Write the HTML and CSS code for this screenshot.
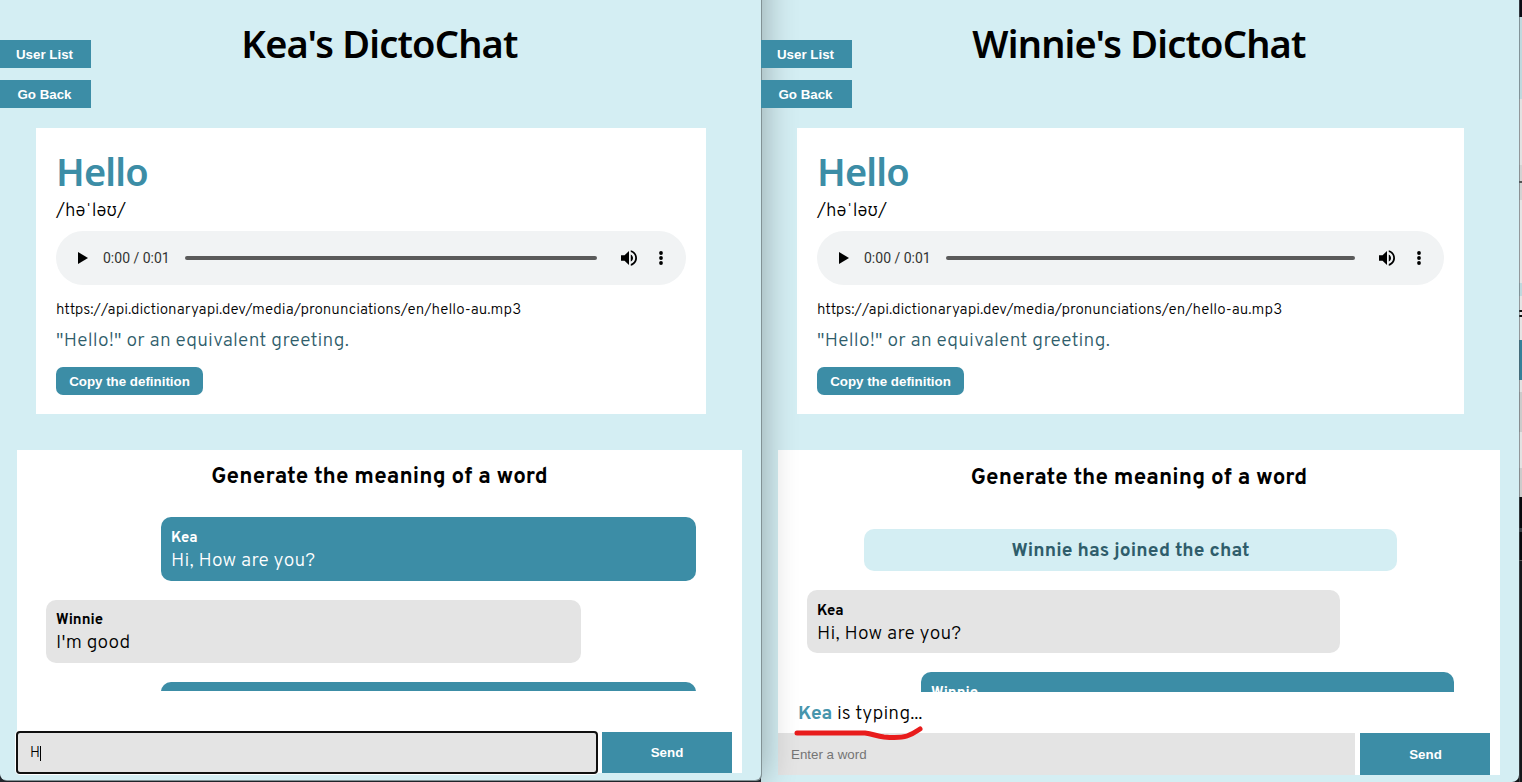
FILE: index.html
```html
<!DOCTYPE html>
<html lang="en">
<head>
<meta charset="utf-8">
<title>DictoChat</title>
<link rel="stylesheet" href="styles.css">
</head>
<body>
<div class="windows">
  <section class="window window-kea">
    <header class="topbar">
      <nav class="nav"><button class="nav-button">User List</button><button class="nav-button">Go Back</button></nav>
      <h1 class="title">Kea's DictoChat</h1>
    </header>
    <article class="card">
      <h2 class="word">Hello</h2>
      <p class="phonetic">/həˈləʊ/</p>
      <div class="player">
        <svg class="play" viewBox="0 0 10 12"><path d="M0 0L10 6L0 12Z"/></svg>
        <span class="time">0:00 / 0:01</span>
        <span class="track"></span>
        <svg class="volume" viewBox="3 3 18 18"><path d="M3 9v6h4l5 5V4L7 9H3zm13.5 3c0-1.77-1.02-3.29-2.5-4.03v8.05c1.48-.73 2.5-2.25 2.5-4.02zM14 3.23v2.06c2.89.86 5 3.54 5 6.71s-2.11 5.85-5 6.71v2.06c4.01-.91 7-4.49 7-8.77s-2.99-7.86-7-8.77z"/></svg>
        <svg class="more" viewBox="0 0 4 14"><circle cx="2" cy="2" r="1.9"/><circle cx="2" cy="7" r="1.9"/><circle cx="2" cy="12" r="1.9"/></svg>
      </div>
      <p class="url">https://api.dictionaryapi.dev/media/pronunciations/en/hello-au.mp3</p>
      <p class="definition">"Hello!" or an equivalent greeting.</p>
      <button class="copy">Copy the definition</button>
    </article>
    <section class="chat">
      <h3 class="chat-title">Generate the meaning of a word</h3>
      <div class="messages">
        <div class="message mine"><b class="author">Kea</b><p class="text">Hi, How are you?</p></div>
        <div class="message theirs"><b class="author">Winnie</b><p class="text">I'm good</p></div>
        <div class="message mine"></div>
      </div>
      <p class="typing"></p>
      <form class="composer">
        <div class="field field-focused">H<span class="caret"></span></div>
        <button class="send" type="button">Send</button>
      </form>
    </section>
  </section>

  <section class="window window-winnie">
    <header class="topbar">
      <nav class="nav"><button class="nav-button">User List</button><button class="nav-button">Go Back</button></nav>
      <h1 class="title">Winnie's DictoChat</h1>
    </header>
    <article class="card">
      <h2 class="word">Hello</h2>
      <p class="phonetic">/həˈləʊ/</p>
      <div class="player">
        <svg class="play" viewBox="0 0 10 12"><path d="M0 0L10 6L0 12Z"/></svg>
        <span class="time">0:00 / 0:01</span>
        <span class="track"></span>
        <svg class="volume" viewBox="3 3 18 18"><path d="M3 9v6h4l5 5V4L7 9H3zm13.5 3c0-1.77-1.02-3.29-2.5-4.03v8.05c1.48-.73 2.5-2.25 2.5-4.02zM14 3.23v2.06c2.89.86 5 3.54 5 6.71s-2.11 5.85-5 6.71v2.06c4.01-.91 7-4.49 7-8.77s-2.99-7.86-7-8.77z"/></svg>
        <svg class="more" viewBox="0 0 4 14"><circle cx="2" cy="2" r="1.9"/><circle cx="2" cy="7" r="1.9"/><circle cx="2" cy="12" r="1.9"/></svg>
      </div>
      <p class="url">https://api.dictionaryapi.dev/media/pronunciations/en/hello-au.mp3</p>
      <p class="definition">"Hello!" or an equivalent greeting.</p>
      <button class="copy">Copy the definition</button>
    </article>
    <section class="chat">
      <h3 class="chat-title">Generate the meaning of a word</h3>
      <div class="messages">
        <div class="message notice">Winnie has joined the chat</div>
        <div class="message theirs"><b class="author">Kea</b><p class="text">Hi, How are you?</p></div>
        <div class="message mine"><b class="author">Winnie</b></div>
      </div>
      <p class="typing"><b>Kea</b> is typing...</p>
      <form class="composer">
        <div class="field placeholder">Enter a word</div>
        <button class="send" type="button">Send</button>
      </form>
    </section>
    <svg class="underline" viewBox="0 0 132 16"><path d="M4 7H72C80 8 83 10 91 11C101 12 108 12 114 10C120 8 124 5 127 3"/></svg>
  </section>
  <aside class="backdrop"></aside>
</div>
</body>
</html>
```
FILE: styles.css
```css
* { box-sizing: border-box; }
body { margin: 0; width: 1522px; height: 782px; overflow: hidden; background: #252a30; font-family: Overpass, "Open Sans", sans-serif; color: #000; }
h1, h2, h3, p { margin: 0; }
button { border: 0; padding: 0; color: #fff; background: #3c8da6; font: bold 13.333px "Liberation Sans", Arial, sans-serif; }
.windows { display: grid; grid-template-columns: 761px 758px 3px; height: 782px; background: linear-gradient(90deg, #252a30 0 1510px, #101215 1510px); }
.window { position: relative; background: #d4eef3; }
.window-kea { height: 820px; margin-top: -40px; padding-top: 40px; border-radius: 0 0 6px 6px; box-shadow: 1px 1px 0 #829295, 2px 0 34px rgba(0, 0, 0, .3); z-index: 1; }
.window-winnie { height: 782px; border-radius: 0 0 7px 0; }
.topbar { display: grid; height: 128px; }
.topbar > * { grid-area: 1 / 1; }
.nav { display: flex; flex-direction: column; gap: 12px; padding-top: 40px; width: 91px; z-index: 1; }
.nav-button { height: 28px; padding-right: 2px; }
.title { padding: 16px 2px 0 0; text-align: center; font: 600 38px/54px "Noto Sans", sans-serif; letter-spacing: -.8px; }
.card { height: 286px; margin: 0 55px 0 36px; padding: 18px 20px 20px; background: #fff; }
.word { color: #3c8da6; font: 600 38px/50px "Noto Sans", sans-serif; letter-spacing: -.8px; }
.phonetic { padding-top: 3px; font-size: 18.8px; line-height: 24px; font-weight: 300; }
.player { display: flex; align-items: center; height: 54px; margin-top: 8px; padding: 0 23px 0 22px; border-radius: 27px; background: #f1f3f4; }
.play { width: 10px; height: 12px; margin-right: 15px; }
.time { width: 82px; font: 14px Roboto, sans-serif; color: #333; }
.track { flex: 1; height: 4px; border-radius: 2px; background: #5a5a5a; }
.volume { width: 16px; height: 16px; margin: 0 22px 0 24px; }
.more { width: 4px; height: 14px; }
.url { margin-top: 16px; font-size: 15.2px; line-height: 20px; font-weight: 300; letter-spacing: .02px; }
.definition { margin-top: 6px; color: #2f5d6b; font-size: 19.2px; line-height: 28px; font-weight: 300; letter-spacing: .22px; }
.copy { display: block; width: 147px; height: 28px; margin-top: 12px; border-radius: 7px; }
.chat { display: flex; flex-direction: column; height: 323px; margin: 36px 19px 0 17px; background: #fff; }
.chat-title { height: 50px; padding-top: 3px; text-align: center; font-size: 22.4px; line-height: 50px; font-weight: 700; letter-spacing: .13px; }
.messages { display: flex; flex-direction: column; gap: 19px; height: 191px; padding: 17px 46px 0 29px; overflow: hidden; }
.message { flex: none; width: 535px; height: 63px; padding: 12px 10px 0; border-radius: 10px; }
.mine { align-self: flex-end; height: 64px; background: #3c8da6; color: #fff; }
.theirs { background: #e4e4e4; }
.window-kea .theirs { padding-top: 11px; }
.notice { align-self: center; height: 42px; padding: 1px 0 0; background: #d4eef3; color: #2f5d6b; text-align: center; font-size: 19.2px; line-height: 42px; font-weight: 700; letter-spacing: .1px; }
.author { display: block; font-size: 14.9px; line-height: 20px; }
.text { font-size: 19.2px; line-height: 24px; font-weight: 300; letter-spacing: .2px; }
.typing { height: 41px; padding: 2px 0 0 20px; font-size: 19.2px; line-height: 41px; font-weight: 300; letter-spacing: .1px; }
.typing b { color: #4795ac; font-weight: 700; }
.composer { display: flex; gap: 5px; height: 41px; padding-right: 10px; }
.field { display: flex; align-items: center; flex: 1; padding-left: 13px; background: #e4e4e4; font-size: 14.4px; font-weight: 300; }
.field-focused { padding-top: 1px; outline: 2px solid #101010; outline-offset: -1px; border-radius: 3px; box-shadow: 0 0 0 2px #fff; }
.caret { width: 1px; height: 15px; background: #000; }
.placeholder { color: #757575; font: 13.333px "Liberation Sans", sans-serif; }
.send { width: 130px; }
.window-winnie .chat { height: 325px; }
.window-winnie .chat-title { line-height: 52px; }
.window-winnie .messages { height: 192px; padding-top: 29px; }
.window-winnie .message { width: 533px; }
.window-winnie .composer { height: 42px; }
.window-winnie .send { padding-left: 1px; }
.underline { position: absolute; left: 32px; top: 726px; width: 132px; height: 16px; fill: none; stroke: #e81c1c; stroke-width: 5; stroke-linecap: round; stroke-linejoin: round; }
.backdrop { border-left: 1px solid rgba(80, 90, 95, .55); background: linear-gradient(#0c0c14 0 17px, #bfd9de 17px 99px, #e2e2e2 99px 165px, #d3d3d3 165px 181px, #555 181px 183px, #d3d3d3 183px 200px, #e5e5e5 200px 283px, #bfd9de 283px 296px, #e5e5e5 296px 310px, #111 310px 312px, #e5e5e5 312px 315px, #111 315px 317px, #e5e5e5 317px 340px, #35819a 340px 380px, #e2e2e2 380px 392px, #cbcbcb 392px 432px, #e2e2e2 432px 468px, #cbcbcb 468px 497px, #07090d 497px 528px, #333c42 528px 532px, #07090d 532px 560px, #555 560px 561px, #14171a 561px); }
```
